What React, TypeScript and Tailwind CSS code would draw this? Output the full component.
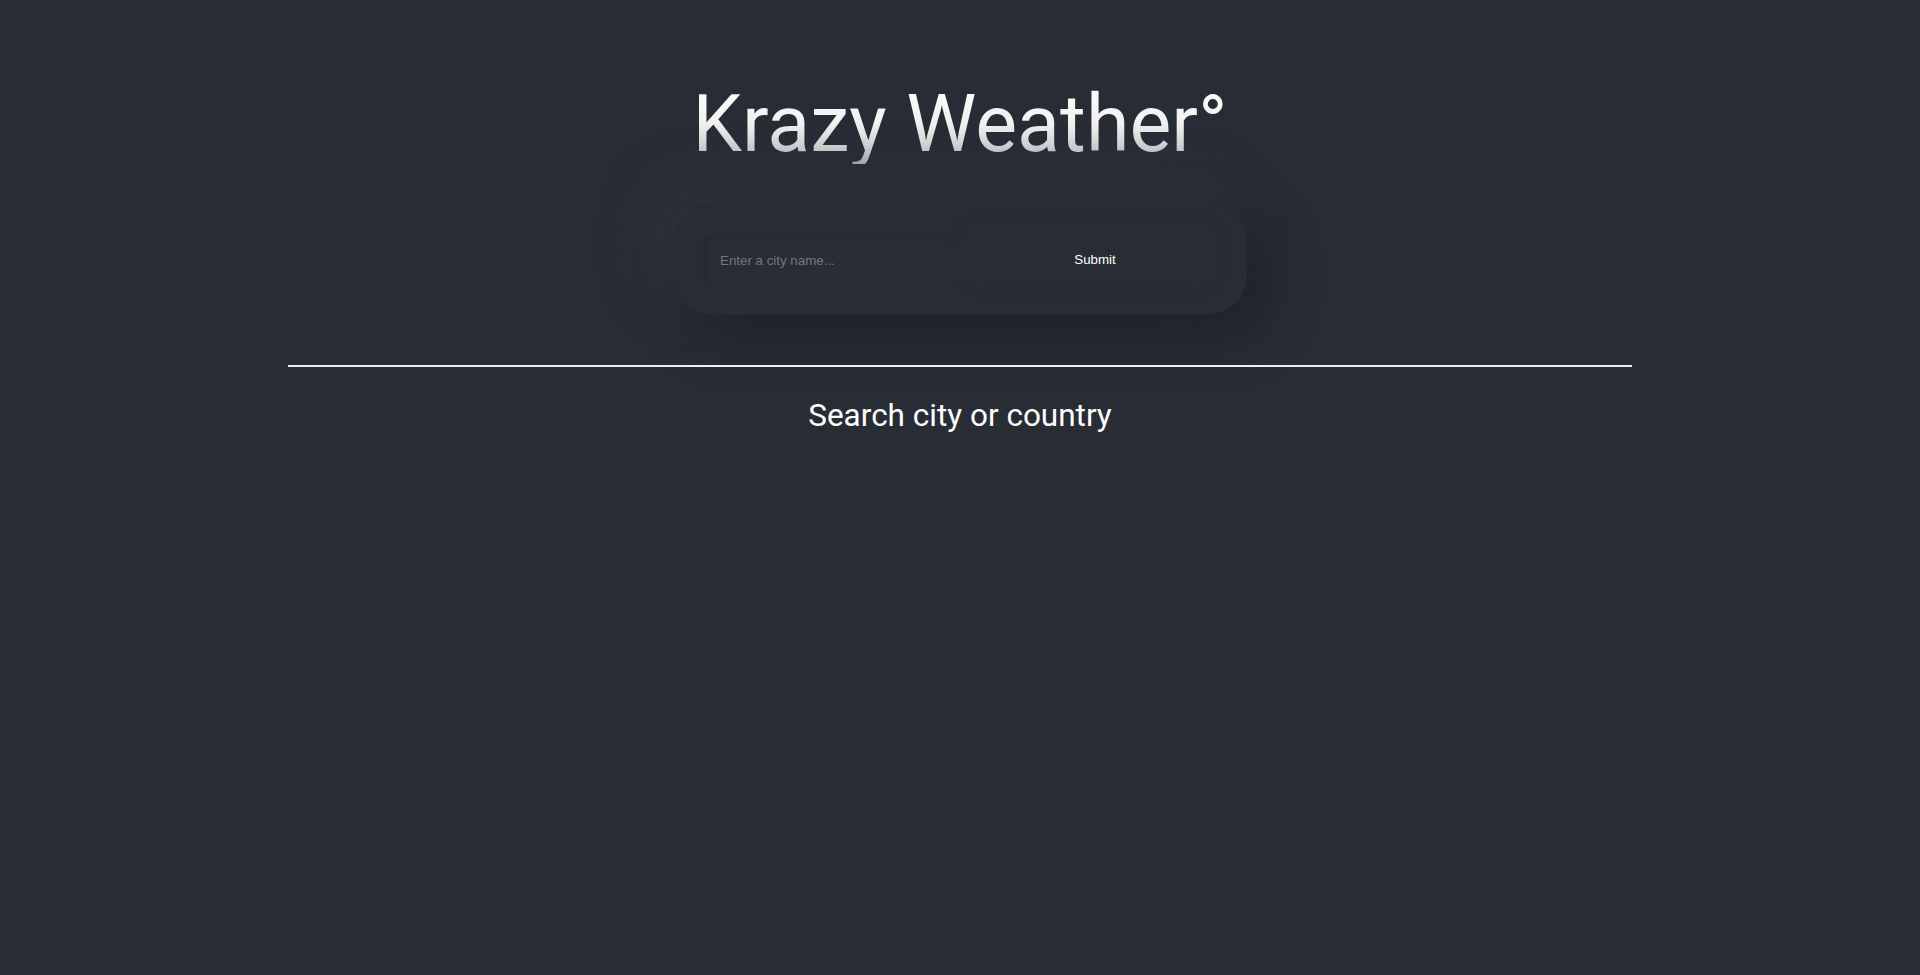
export default function App() {
  return (
    <div className="min-h-screen bg-[#282c35] flex flex-col items-center font-['Roboto',sans-serif]">
      {/* title */}
      <h1 className="mt-[85px] text-[79px] leading-none font-normal bg-gradient-to-b from-white via-[#f0f0f0] to-[#bfc0c3] bg-clip-text text-transparent">
        Krazy Weather°
      </h1>

      {/* search form */}
      <form
        className="mt-[39px] flex items-center rounded-[40px] bg-[#282c35] pl-[30px] pr-[32px] pt-[33px] pb-[31px] shadow-[18px_18px_50px_#1f2229,-18px_-18px_50px_#30343e]"
        onSubmit={(e) => e.preventDefault()}
      >
        <input
          type="text"
          placeholder="Enter a city name..."
          className="w-[272px] h-[48px] rounded-l-[6px] bg-[#292d36] px-[17px] font-['Liberation_Sans',Arial,sans-serif] text-[13.33px] text-white placeholder:text-[#74777c] outline-none shadow-[inset_2px_2px_6px_#252830]"
        />
        <button
          type="submit"
          className="w-[240px] h-[48px] bg-[#282c35] font-['Liberation_Sans',Arial,sans-serif] text-[13.33px] text-white shadow-[-6px_-6px_14px_#2b2f38]"
        >
          Submit
        </button>
      </form>

      <hr className="mt-[50px] w-[70%] border-0 h-[2px] bg-[#ededed]" />

      <h2 className="mt-[33px] text-[31.5px] leading-none font-normal text-white">
        Search city or country
      </h2>
    </div>
  )
}
